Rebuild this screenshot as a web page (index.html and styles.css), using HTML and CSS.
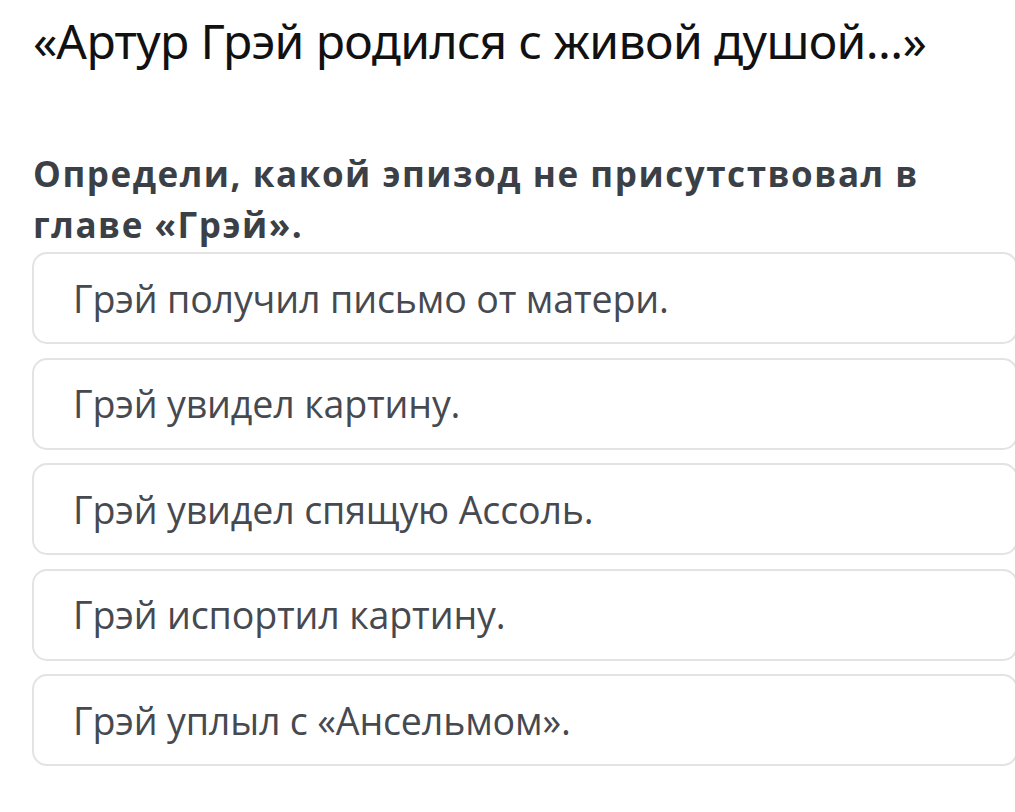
FILE: index.html
```html
<!DOCTYPE html>
<html lang="ru">
<head>
<meta charset="utf-8">
<link rel="stylesheet" href="styles.css">
</head>
<body>
<main class="page">
  <h1 class="title">«Артур Грэй родился с живой душой...»</h1>
  <h2 class="question">Определи, какой эпизод не присутствовал в главе «Грэй».</h2>
  <div class="options">
    <div class="option">Грэй получил письмо от матери.</div>
    <div class="option">Грэй увидел картину.</div>
    <div class="option">Грэй увидел спящую Ассоль.</div>
    <div class="option">Грэй испортил картину.</div>
    <div class="option">Грэй уплыл с «Ансельмом».</div>
  </div>
</main>
</body>
</html>
```

FILE: styles.css
```css
html, body {
  margin: 0;
  padding: 0;
  background: #ffffff;
  overflow: hidden;
}
.page {
  width: 985px;
  padding: 7px 0 0 33px;
  font-family: "Open Sans", "Noto Sans", sans-serif;
}
.title {
  margin: 0;
  font-family: "Noto Sans", "Open Sans", sans-serif;
  font-size: 48px;
  font-weight: 400;
  letter-spacing: -0.6px;
  line-height: 68px;
  color: #111111;
}
.question {
  margin: 73px 0 0 0;
  width: 950px;
  font-size: 35px;
  font-weight: 700;
  letter-spacing: 1.55px;
  line-height: 51px;
  color: #3b3f46;
}
.options {
  margin-top: 2px;
  margin-left: -1px;
  display: flex;
  flex-direction: column;
  gap: 13.5px;
}
.option {
  height: 88px;
  box-sizing: content-box;
  border: 2px solid #e3e3e3;
  border-radius: 15px;
  padding: 0 0 0 39px;
  display: flex;
  align-items: center;
  font-size: 37.6px;
  letter-spacing: -0.15px;
  color: #464a50;
}
```
